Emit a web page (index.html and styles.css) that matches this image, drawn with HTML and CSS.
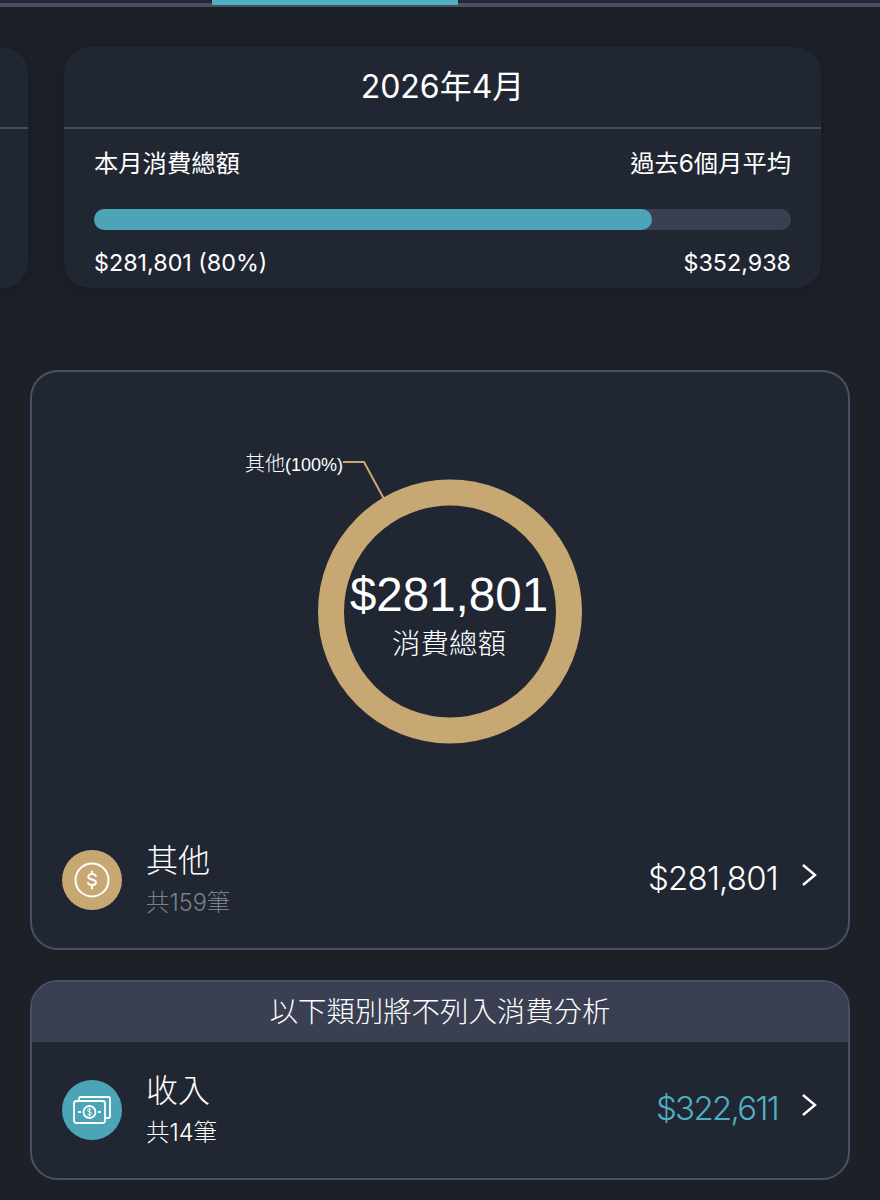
FILE: index.html
```html
<!DOCTYPE html>
<html lang="zh-Hant">
<head>
    <meta charset="UTF-8">
    <meta name="viewport" content="width=device-width, initial-scale=1.0">
    <title>消費分析</title>
    <link rel="stylesheet" href="styles.css">
</head>
<body>
    <div class="tabs">
        <div class="tab-active"></div>
    </div>

    <div class="carousel">
        <div class="month-card month-card-prev">
            <div class="month-title"></div>
        </div>
        <div class="month-card">
            <div class="month-title">2026年4月</div>
            <div class="month-body">
                <div class="month-row month-row-labels">
                    <span>本月消費總額</span>
                    <span>過去6個月平均</span>
                </div>
                <div class="progress">
                    <div class="progress-fill" style="width: 80%"></div>
                </div>
                <div class="month-row">
                    <span>$281,801 (80%)</span>
                    <span>$352,938</span>
                </div>
            </div>
        </div>
    </div>

    <div class="panel panel-chart">
        <div class="chart">
            <svg width="816" height="450" viewBox="0 0 816 450">
                <path d="M352 127 L332 90 H311" fill="none" stroke="#c7a872" stroke-width="2"/>
                <circle cx="418" cy="239.500" r="119" fill="none" stroke="#c7a872" stroke-width="26"/>
                <text class="chart-label" x="311" y="99" text-anchor="end">其他<tspan class="chart-label-pct">(100%)</tspan></text>
                <text class="chart-total" x="417" y="239" text-anchor="middle">$281,801</text>
                <text class="chart-caption" x="417" y="282" text-anchor="middle">消費總額</text>
            </svg>
        </div>
        <div class="row">
            <div class="row-icon icon-other">
                <svg width="36" height="36" viewBox="0 0 36 36">
                    <circle cx="18" cy="18" r="16.500" fill="none" stroke="#fff" stroke-width="2"/>
                    <path d="M21.800 14c-.5-1.300-1.900-2-3.800-2-2.200 0-3.700 1-3.700 2.700 0 3.800 7.600 1.900 7.600 5.700 0 1.700-1.600 2.700-3.900 2.700-2 0-3.400-.8-3.900-2.100M18 9.500v2.500M18 24v2.500" fill="none" stroke="#fff" stroke-width="2" stroke-linecap="round"/>
                </svg>
            </div>
            <div class="row-text">
                <div class="row-name">其他</div>
                <div class="row-count row-count-muted">共159筆</div>
            </div>
            <div class="row-amount">$281,801</div>
            <svg class="chevron" width="16" height="24" viewBox="0 0 16 24">
                <path d="M2 2 L14 12 L2 22" fill="none" stroke="#fff" stroke-width="2.400"/>
            </svg>
        </div>
    </div>

    <div class="panel panel-excluded">
        <div class="panel-header">以下類別將不列入消費分析</div>
        <div class="row">
            <div class="row-icon icon-income">
                <svg width="38" height="28" viewBox="0 0 38 28">
                    <path d="M6 4V2.500A1.500 1.500 0 0 1 7.500 1H35.500A1.500 1.500 0 0 1 37 2.500V20.500A1.500 1.500 0 0 1 35.500 22H32" fill="none" stroke="#fff" stroke-width="1.800"/>
                    <rect x="1" y="5" width="31" height="22" rx="2.500" fill="#4ba5b6" stroke="#fff" stroke-width="1.800"/>
                    <circle cx="16.500" cy="16" r="6" fill="none" stroke="#fff" stroke-width="1.800"/>
                    <path d="M5 16H8M25 16H28" stroke="#fff" stroke-width="1.800"/>
                    <path d="M18.500 13.800c-.4-.6-1.100-.9-2-.9-1.200 0-2 .6-2 1.500 0 2 4.100 1 4.100 3.100 0 .9-.9 1.500-2.100 1.500-1 0-1.800-.4-2.100-1.100M16.500 12v8" fill="none" stroke="#fff" stroke-width="1"/>
                </svg>
            </div>
            <div class="row-text">
                <div class="row-name">收入</div>
                <div class="row-count">共14筆</div>
            </div>
            <div class="row-amount row-amount-income">$322,611</div>
            <svg class="chevron" width="16" height="24" viewBox="0 0 16 24">
                <path d="M2 2 L14 12 L2 22" fill="none" stroke="#fff" stroke-width="2.400"/>
            </svg>
        </div>
    </div>
</body>
</html>
```

FILE: styles.css
```css
body {
    font-family: Inter, "Noto Sans CJK TC", sans-serif;
    width: 880px;
    height: 1200px;
    margin: 0;
    overflow: hidden;
    background-color: #1c2027;
    color: #fff;
}
.tabs {
    height: 3px;
    border-bottom: 4px solid #4a5064;
    background-color: #23272f;
}
.tab-active {
    width: 246px;
    height: 5px;
    margin-left: 212px;
    background-color: #4fb0c4;
}
.carousel {
    display: flex;
    gap: 36px;
    margin-top: 40px;
    padding-left: 64px;
}
.month-card {
    flex: 0 0 757px;
    height: 241px;
    border-radius: 26px;
    background-color: #212732;
    box-shadow: 0 4px 14px rgba(0, 0, 0, 0.15);
}
.month-card-prev {
    margin-left: -793px;
}
.month-title {
    height: 80px;
    border-bottom: 2px solid #454b5f;
    text-align: center;
    font-size: 32px;
    line-height: 80px;
}
.month-body {
    padding: 17px 30px 0;
}
.month-row {
    display: flex;
    justify-content: space-between;
    font-size: 23.300px;
    line-height: 34px;
}
.month-row-labels {
    font-size: 24.300px;
}
.progress {
    height: 21px;
    margin: 29px 0 16px;
    border-radius: 11px;
    background-color: #3a4052;
}
.progress-fill {
    height: 100%;
    border-radius: 11px;
    background-color: #4ba5b6;
}
.panel {
    width: 820px;
    box-sizing: border-box;
    margin-left: 30px;
    border: 2px solid #4a5166;
    border-radius: 28px;
    background-color: #212732;
    overflow: hidden;
}
.panel-chart {
    height: 580px;
    margin-top: 82px;
}
.panel-excluded {
    height: 200px;
    margin-top: 30px;
}
.chart {
    height: 450px;
}
.chart svg {
    display: block;
}
.chart-label {
    font-family: "Liberation Sans", "Noto Sans CJK TC", sans-serif;
    font-size: 20px;
    font-weight: 300;
    fill: #fff;
}
.chart-label-pct {
    font-size: 18px;
}
.chart-total {
    font-family: "Liberation Sans", sans-serif;
    font-size: 47.500px;
    fill: #fff;
}
.chart-caption {
    font-size: 28.500px;
    font-weight: 300;
    fill: #fff;
}
.panel-header {
    height: 60px;
    background-color: #3a4052;
    text-align: center;
    font-size: 28.400px;
    font-weight: 300;
    line-height: 60px;
}
.row {
    display: flex;
    align-items: center;
    height: 136px;
    padding: 0 30px;
}
.panel-chart .row {
    height: 116px;
}
.row-icon {
    display: flex;
    flex: 0 0 60px;
    align-items: center;
    justify-content: center;
    width: 60px;
    height: 60px;
    border-radius: 50%;
}
.icon-other {
    background-color: #c7a872;
}
.icon-income {
    background-color: #4ba5b6;
}
.row-text {
    display: flex;
    flex: 1;
    flex-direction: column;
    gap: 4px;
    margin-left: 24px;
}
.row-name {
    font-size: 32px;
    font-weight: 300;
    line-height: 42px;
}
.row-count {
    font-size: 23.500px;
    font-weight: 300;
    line-height: 34px;
}
.row-count-muted {
    color: #7c7f87;
}
.row-amount {
    margin-top: -4px;
    font-size: 33px;
    font-weight: 300;
    letter-spacing: -0.800px;
}
.row-amount-income {
    color: #4fb0c4;
    letter-spacing: -1.700px;
}
.chevron {
    margin: -10px 1px 0 23px;
}
```
